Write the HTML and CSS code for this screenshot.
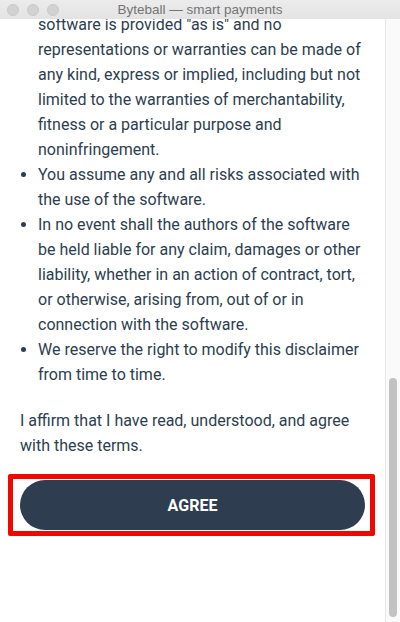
FILE: index.html
```html
<!DOCTYPE html>
<html lang="en">
<head>
    <meta charset="UTF-8">
    <title>Byteball — smart payments</title>
    <link rel="stylesheet" href="styles.css">
</head>
<body>
<div class="window">
    <div class="titlebar">
        <div class="lights">
            <span></span>
            <span></span>
            <span></span>
        </div>
        <div class="title">Byteball — smart payments</div>
    </div>
    <div class="main">
        <div class="scroll">
            <div class="content">
                <ul class="terms">
                    <li class="cont">software is provided "as is" and no representations or warranties can be made of any kind, express or implied, including but not limited to the warranties of merchantability, fitness or a particular purpose and noninfringement.</li>
                    <li>You assume any and all risks associated with the use of the software.</li>
                    <li>In no event shall the authors of the software be held liable for any claim, damages or other liability, whether in an action of contract, tort, or otherwise, arising from, out of or in connection with the software.</li>
                    <li>We reserve the right to modify this disclaimer from time to time.</li>
                </ul>
                <p class="affirm">I affirm that I have read, understood, and agree with these terms.</p>
                <div class="mark">
                    <button class="agree">AGREE</button>
                </div>
            </div>
        </div>
        <div class="scrollbar">
            <div class="thumb"></div>
        </div>
    </div>
</div>
</body>
</html>
```

FILE: styles.css
```css
* {
    margin: 0;
    padding: 0;
    box-sizing: border-box;
}

body {
    font-family: Roboto, "Liberation Sans", sans-serif;
    background-color: #fff;
}

.window {
    width: 400px;
    height: 622px;
    display: flex;
    flex-direction: column;
    overflow: hidden;
}

.titlebar {
    height: 19px;
    flex: none;
    display: flex;
    align-items: center;
    background: linear-gradient(#ececec, #e3e3e3);
}
.lights {
    display: flex;
    gap: 8px;
    padding-left: 7px;
}
.lights span {
    width: 12px;
    height: 12px;
    border-radius: 50%;
    background-color: #d2d2d2;
    border: 1px solid #c8c8c8;
}
.title {
    flex: 1;
    text-align: center;
    margin-right: 59px;
    font-family: "Helvetica Neue", "Liberation Sans", sans-serif;
    font-size: 13.5px;
    color: #747474;
}

.main {
    flex: 1;
    display: flex;
    min-height: 0;
}
.scroll {
    flex: 1;
    overflow: hidden;
}
.content {
    margin-top: -7px;
    padding: 0 20px;
    color: #2c3e50;
    font-size: 16px;
    line-height: 25px;
}
.terms {
    padding-left: 18px;
}
.terms li.cont {
    list-style: none;
}
.affirm {
    margin-top: 21px;
}

.mark {
    margin: 16px -10px 0 -12px;
    border: 5px solid #f00800;
    border-radius: 2px;
    padding: 1px 5px 1px 7px;
}
.agree {
    display: block;
    width: 100%;
    height: 50px;
    border: none;
    border-radius: 25px;
    background-color: #2e3d4f;
    color: #fff;
    font-family: Roboto, "Liberation Sans", sans-serif;
    font-size: 16px;
    font-weight: bold;
}

.scrollbar {
    width: 15px;
    flex: none;
    border-left: 1px solid #e6e6e6;
    background-color: #fafafa;
    padding: 359px 3px 5px 3px;
}
.thumb {
    height: 100%;
    border-radius: 4px;
    background-color: #c2c2c2;
}
```
